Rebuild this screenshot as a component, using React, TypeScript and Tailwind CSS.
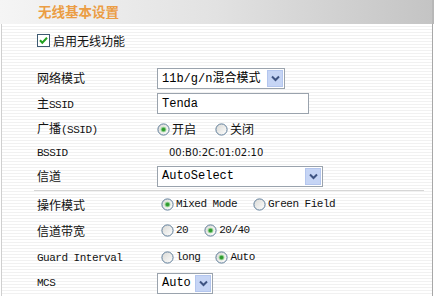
import React from "react";

const cjk = { fontFamily: '"Noto Sans CJK SC", "Noto Sans", sans-serif' };
const mono = { fontFamily: '"Liberation Mono", "DejaVu Sans Mono", "Noto Sans CJK SC", monospace' };

function Radio({ checked }: { checked?: boolean }) {
  return (
    <svg width="13" height="13" viewBox="0 0 13 13" className="shrink-0">
      <defs>
        <linearGradient id="rg" x1="0" y1="0" x2="1" y2="1">
          <stop offset="0" stopColor="#d8d8d4" />
          <stop offset="1" stopColor="#ffffff" />
        </linearGradient>
      </defs>
      <circle cx="6.5" cy="6.5" r="5.6" fill="url(#rg)" stroke="#5f7d99" strokeWidth="1" />
      {checked && (
        <>
          <circle cx="6.5" cy="6.5" r="2.8" fill="#8fd08f" />
          <circle cx="6.5" cy="6.5" r="1.8" fill="#2f9a2f" />
        </>
      )}
    </svg>
  );
}

function Arrow() {
  return (
    <div className="w-[16px] h-[17px] bg-[#c6d5f5] border border-[#b4c6ee] flex items-center justify-center shrink-0">
      <svg width="9" height="7" viewBox="0 0 9 7">
        <path d="M1 1.5 L4.5 5 L8 1.5" fill="none" stroke="#3f5482" strokeWidth="2" />
      </svg>
    </div>
  );
}

function Select({ text, w }: { text: string; w: string }) {
  return (
    <div className={`${w} h-[21px] border border-[#9aa3ad] bg-white flex items-center justify-between pl-[4px] pr-[1px]`}>
      <span className="text-[12px] leading-none text-black whitespace-nowrap" style={mono}>
        {text}
      </span>
      <Arrow />
    </div>
  );
}

function Row({ h, label, labelStyle, children }: { h: string; label: React.ReactNode; labelStyle?: React.CSSProperties; children?: React.ReactNode }) {
  return (
    <div className={`${h} flex items-center`}>
      <div className="w-[155px] pl-[35px] text-[12px] leading-none text-[#111]" style={labelStyle ?? cjk}>
        {label}
      </div>
      <div className="flex items-center">{children}</div>
    </div>
  );
}

function RItem({ checked, children, ml, style }: { checked?: boolean; children: React.ReactNode; ml?: string; style?: React.CSSProperties }) {
  return (
    <div className={`flex items-center gap-[2px] ${ml ?? ""}`}>
      <Radio checked={checked} />
      <span className="text-[11px] tracking-[-0.5px] leading-none text-[#111]" style={style ?? mono}>
        {children}
      </span>
    </div>
  );
}

export default function App() {
  return (
    <div className="w-[434px] h-[296px] overflow-hidden bg-white">
      <div className="h-[24px] bg-gradient-to-r from-[#f5f5f5] via-[#e2e2e2] to-[#c4c4c4] border-r-2 border-[#b8b8b8] flex items-center pl-[38px]">
        <span className="text-[13.5px] font-bold text-[#eb9d44] leading-none" style={cjk}>
          无线基本设置
        </span>
      </div>
      <div className="ml-[1px] mr-[1px] h-[272px] border-l border-r border-l-[#cfcfcf] border-r-[#a8a8a8] bg-[repeating-linear-gradient(to_bottom,#ffffff_0px,#ffffff_2px,#f1f1f1_2px,#f1f1f1_3px)] flex flex-col">
        <div className="mt-[6px] h-[22px] flex items-center pl-[35px] gap-[3px]">
          <svg width="13" height="13" viewBox="0 0 13 13">
            <rect x="0.5" y="0.5" width="12" height="12" fill="#fff" stroke="#3d5a72" />
            <path d="M3 6.3 L5.3 8.8 L10 3.8" fill="none" stroke="#21a121" strokeWidth="2" />
          </svg>
          <span className="text-[12px] leading-none text-[#111]" style={cjk}>
            启用无线功能
          </span>
        </div>
        <div className="h-[14px]" />
        <Row h="h-[26px]" label="网络模式">
          <div className="w-[128px] h-[21px] border border-[#9aa3ad] bg-white flex items-center justify-between pl-[4px] pr-[1px]">
            <span className="text-[12px] leading-none text-black whitespace-nowrap">
              <span style={mono}>11b/g/n</span>
              <span style={cjk}>混合模式</span>
            </span>
            <Arrow />
          </div>
        </Row>
        <Row h="h-[26px]" label={<><span style={cjk}>主</span><span style={mono} className="text-[11px] tracking-[-0.5px]">SSID</span></>} labelStyle={{}}>
          <div className="w-[152px] h-[21px] border border-[#9aa3ad] bg-white flex items-center pl-[4px]">
            <span className="text-[12px] leading-none text-black" style={mono}>Tenda</span>
          </div>
        </Row>
        <Row h="h-[26px]" label={<><span style={cjk}>广播</span><span style={mono} className="text-[11px] tracking-[-0.5px]">(SSID)</span></>} labelStyle={{}}>
          <RItem checked style={cjk}>
            <span className="text-[12px] tracking-normal">开启</span>
          </RItem>
          <RItem ml="ml-[19px]" style={cjk}>
            <span className="text-[12px] tracking-normal">关闭</span>
          </RItem>
        </Row>
        <Row h="h-[22px]" label={<span className="text-[11px] tracking-[-0.5px]">BSSID</span>} labelStyle={mono}>
          <span className="ml-[12px] text-[10px] leading-none text-[#111]" style={{ fontFamily: '"DejaVu Sans", sans-serif' }}>
            00:B0:2C:01:02:10
          </span>
        </Row>
        <Row h="h-[26px]" label="信道">
          <Select text="AutoSelect" w="w-[166px]" />
        </Row>
        <div className="h-[4px] flex items-start pt-[1px]">
          <div className="ml-[32px] w-[390px] h-[1px] bg-[#d6d6d6]" />
        </div>
        <Row h="h-[24px]" label="操作模式">
          <RItem checked ml="ml-[4px]">Mixed Mode</RItem>
          <RItem ml="ml-[16px]">Green Field</RItem>
        </Row>
        <Row h="h-[29px]" label="信道带宽">
          <RItem ml="ml-[4px]">20</RItem>
          <RItem checked ml="ml-[16px]">20/40</RItem>
        </Row>
        <Row h="h-[26px]" label={<span className="text-[11px] tracking-[-0.5px]">Guard Interval</span>} labelStyle={mono}>
          <RItem ml="ml-[4px]">long</RItem>
          <RItem checked ml="ml-[15px]">Auto</RItem>
        </Row>
        <Row h="h-[26px]" label={<span className="text-[11px] tracking-[-0.5px]">MCS</span>} labelStyle={mono}>
          <Select text="Auto" w="w-[56px]" />
        </Row>
      </div>
    </div>
  );
}
